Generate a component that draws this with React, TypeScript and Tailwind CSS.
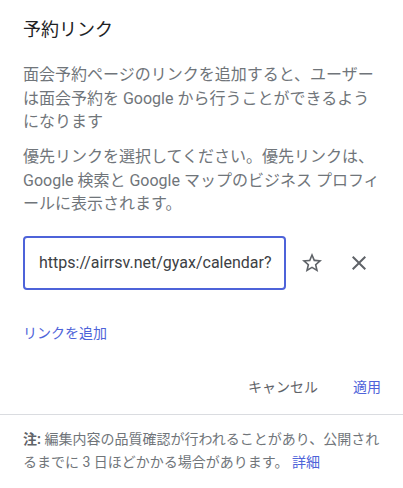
const font = "font-['Roboto','Noto_Sans_CJK_JP',sans-serif]";

const StarIcon = () => (
  <svg viewBox="0 0 24 24" width="24" height="24" fill="#5f6368">
    <path d="M22 9.24l-7.19-.62L12 2 9.19 8.63 2 9.24l5.46 4.73L5.82 21 12 17.27 18.18 21l-1.63-7.03L22 9.24zM12 15.4l-3.76 2.27 1-4.28-3.32-2.88 4.38-.38L12 6.1l1.71 4.04 4.38.38-3.32 2.88 1 4.28L12 15.4z" />
  </svg>
);

const CloseIcon = () => (
  <svg viewBox="0 0 24 24" width="24" height="24" fill="#5f6368">
    <path d="M19 6.41L17.59 5 12 10.59 6.41 5 5 6.41 10.59 12 5 17.59 6.41 19 12 13.41 17.59 19 19 17.59 13.41 12z" />
  </svg>
);

export default function App() {
  return (
    <div className={`w-[403px] h-[488px] bg-white overflow-hidden ${font}`}>
      <div className="pl-[23px] pr-[16px] pt-[18px]">
        <h2 className="text-[18px] leading-[24px] text-[#202124] font-normal">予約リンク</h2>

        <p className="mt-[21px] text-[16px] leading-[23.5px] text-[#70757a]">
          面会予約ページのリンクを追加すると、ユーザー
          <br />
          は面会予約を Google から行うことができるよう
          <br />
          になります
        </p>

        <p className="mt-[11.5px] text-[16px] leading-[23.5px] text-[#70757a]">
          優先リンクを選択してください。優先リンクは、
          <br />
          Google 検索と Google マップのビジネス プロフィ
          <br />
          ールに表示されます。
        </p>

        <div className="mt-[20px] flex items-center">
          <div className="w-[263px] h-[54px] shrink-0 rounded-[4px] border-2 border-[#4e63d9] pl-[14px] pr-[12px] flex items-center">
            <div className="overflow-hidden whitespace-nowrap text-[16px] text-[#3c4043]">
              https://airrsv.net/gyax/calendar?schdlId=T000000000
            </div>
          </div>
          <button className="ml-[13.5px] w-[24px] h-[24px] flex items-center justify-center">
            <StarIcon />
          </button>
          <button className="ml-[23.5px] w-[24px] h-[24px] flex items-center justify-center">
            <CloseIcon />
          </button>
        </div>

        <div className="mt-[33px] text-[14px] leading-[20px] text-[#4e63d9]">リンクを追加</div>
      </div>

      <div className="mt-[34px] flex justify-end gap-[35px] pr-[22px] text-[14px] leading-[20px]">
        <button className="text-[#5f6368]">キャンセル</button>
        <button className="text-[#4e63d9]">適用</button>
      </div>

      <div className="mt-[17px] h-px bg-[#dadce0]" />

      <p className="mt-[13.5px] pl-[23px] pr-[10px] text-[14px] leading-[23px] text-[#70757a]">
        <span className="font-bold text-[#5f6368]">注:</span> 編集内容の品質確認が行われることがあり、公開され
        <br />
        るまでに 3 日ほどかかる場合があります。 <span className="text-[#4e63d9]">詳細</span>
      </p>
    </div>
  );
}
